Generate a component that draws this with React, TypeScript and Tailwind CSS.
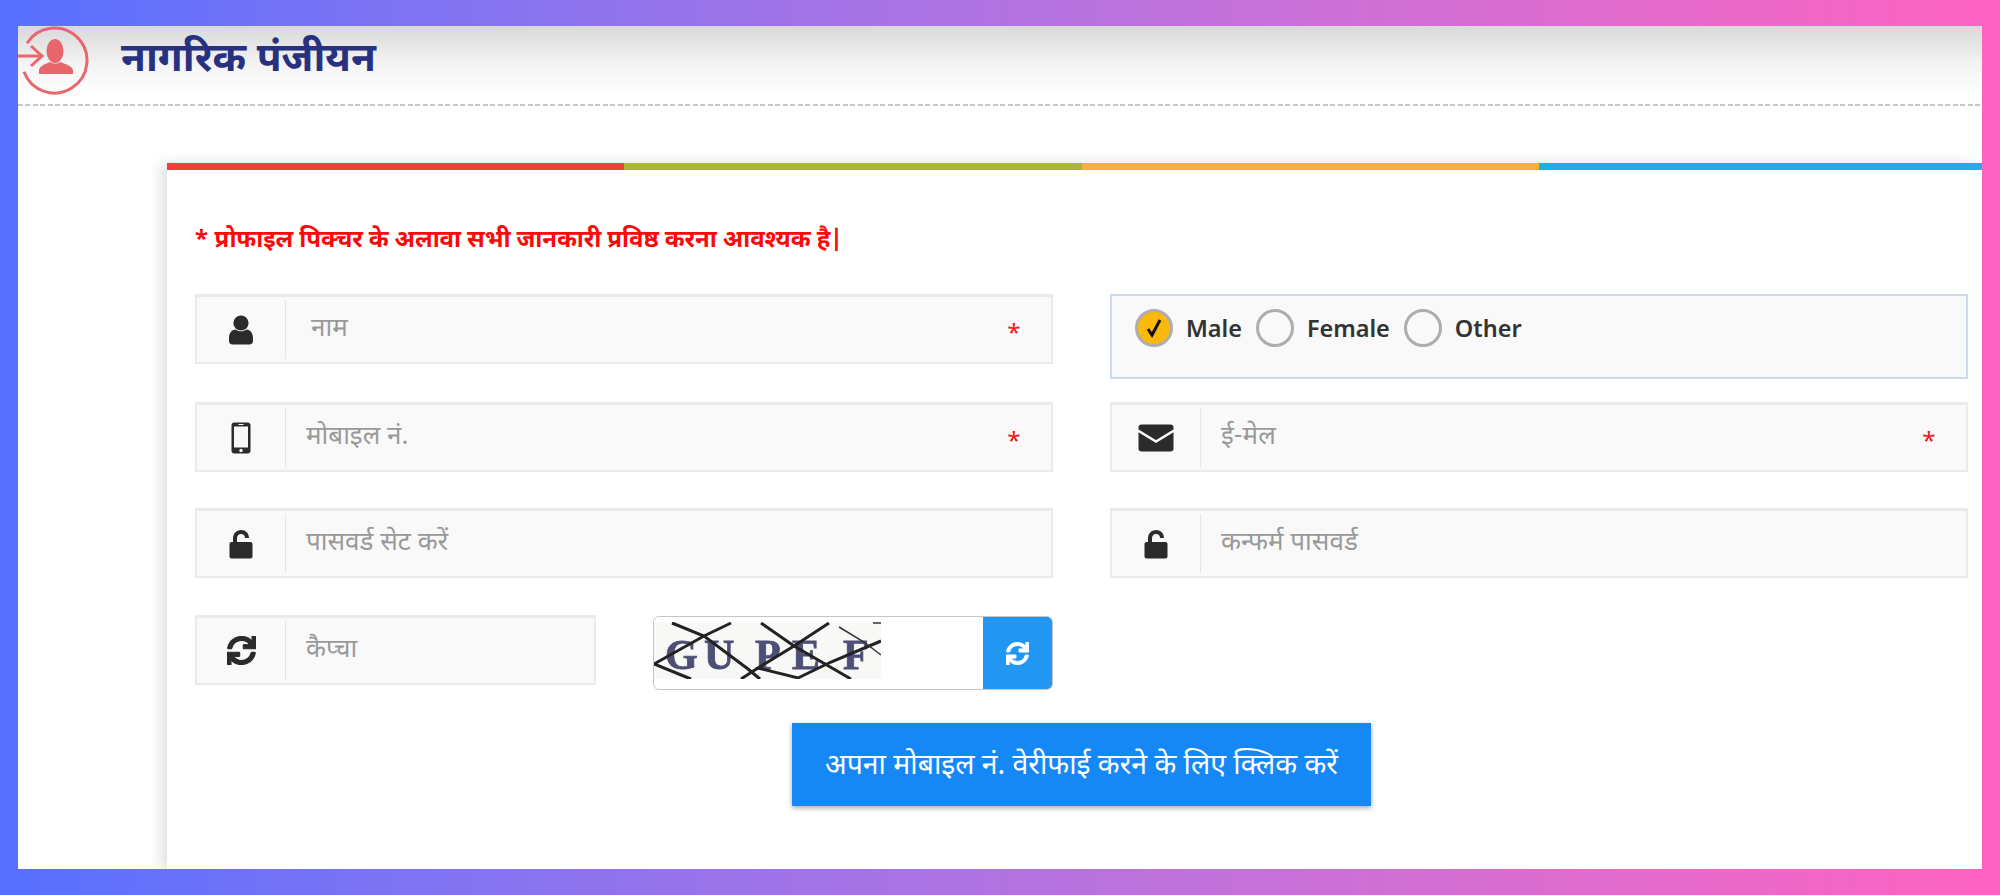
import { FaSync } from 'react-icons/fa';

const font = { fontFamily: '"Noto Sans Devanagari", "Noto Sans", "Open Sans", "Liberation Sans", sans-serif' };

function UserIcon() {
  return (
    <svg width="26" height="30" viewBox="0 0 26 30" fill="#2b2b2b">
      <circle cx="13" cy="8" r="7.6" />
      <path d="M1 23c0-5 3-8.500 6.500-8.500 1.500 1 3.500 1.800 5.500 1.800s4-.8 5.500-1.800C22 14.500 25 18 25 23v3c0 2-1.500 3.500-3.500 3.500h-17C2.500 29.500 1 28 1 26z" />
    </svg>
  );
}

function MobileIcon() {
  return (
    <svg width="20" height="32" viewBox="0 0 20 32">
      <rect x="0.5" y="0.500" width="19" height="31" rx="3" fill="#2b2b2b" />
      <rect x="3" y="4.500" width="14" height="21" fill="#f8f8f8" />
      <rect x="7.500" y="2" width="5" height="1" fill="#f8f8f8" />
      <circle cx="10" cy="28.500" r="1.700" fill="#f8f8f8" />
    </svg>
  );
}

function UnlockIcon() {
  return (
    <svg width="24" height="30" viewBox="0 0 24 30" fill="#2b2b2b">
      <path d="M4 14V9.500C4 4.500 7.500 1 12 1s8 3 8 8h-4c0-2.500-1.500-4-4-4S8 7 8 9.500V14z" />
      <rect x="0.500" y="13" width="23" height="16.500" rx="2" />
    </svg>
  );
}

function MailIcon() {
  return (
    <svg width="36" height="28" viewBox="0 0 36 28">
      <rect x="0.500" y="0.500" width="35" height="27" rx="3" fill="#2b2b2b" />
      <path d="M0 6.500l18 11 18-11" fill="none" stroke="#f8f8f8" strokeWidth="2.500" />
    </svg>
  );
}

function Logo() {
  return (
    <svg width="74" height="72" viewBox="0 0 74 72" className="shrink-0" fill="none">
      <path d="M9 17.200A32.500 32.500 0 1 1 6 45.700" stroke="#e8676d" strokeWidth="3" />
      <path d="M0 30h23M13 20l11 10-11 10" stroke="#e8676d" strokeWidth="3" />
      <ellipse cx="37" cy="25" rx="8.500" ry="12" fill="#e8676d" />
      <path d="M21 48v-4c1-4 6-6 11-8 3 2 7 2 10 0 5 2 12 4 13 8v4z" fill="#e8676d" />
    </svg>
  );
}

function Field({ icon, placeholder, required, indent }: { icon: React.ReactNode; placeholder: string; required?: boolean; indent?: boolean }) {
  return (
    <div className="flex h-[70px] border-2 border-t-[3px] border-[#eaeaea] bg-[#f9f9f9]">
      <div className="flex w-[88px] items-center justify-center">{icon}</div>
      <div className="my-[3px] w-px bg-[#e6e6e6]" />
      <div className={`flex flex-1 items-start justify-between pt-[15px] pr-[30px] ${indent ? 'pl-[25px]' : 'pl-[20px]'}`}>
        <span className="text-[26px] leading-[36px] text-[#999]">{placeholder}</span>
        {required && <span className="mt-[5px] text-[24px] leading-[36px] text-[#f01818]">*</span>}
      </div>
    </div>
  );
}

function Radio({ label, checked }: { label: string; checked?: boolean }) {
  return (
    <div className="flex items-center">
      <span className={`flex h-[38px] w-[38px] items-center justify-center rounded-full border-[3px] border-[#adadad] ${checked ? 'bg-[#fdb90b]' : 'bg-transparent'}`}>
        {checked && (
          <svg width="18" height="20" viewBox="0 0 18 20" fill="none">
            <path d="M3 11l4 6L15 2" stroke="#111" strokeWidth="3" />
          </svg>
        )}
      </span>
      <span className="ml-[13px] mt-[7px] text-[23.5px] font-semibold leading-none text-[#333]">{label}</span>
    </div>
  );
}

function Captcha() {
  return (
    <svg width="227" height="57" viewBox="0 0 227 57" className="bg-[#f8f8f6]">
      <g className="blur-[0.5px]">
        <g fontFamily="Liberation Serif, serif" fontWeight="700" fontSize="42" fill="#4d4f75" stroke="#4d4f75" strokeWidth="0.800">
          <text x="11" y="47">G</text>
          <text x="50" y="47">U</text>
          <text x="101" y="47">P</text>
          <text x="138" y="47">E</text>
          <text x="189" y="47">F</text>
        </g>
        <g stroke="#222" strokeWidth="3" fill="none">
          <path d="M18 1l32 13 44 33 12 10" />
          <path d="M77 1L50 14 0 42l37 15" />
          <path d="M107 1l33 23 57 33" />
          <path d="M175 1l-35 23-36 22-17 11" />
          <path d="M227 19l-50 21-33 16-40-10" />
        </g>
        <path d="M185 5l25 15 17 13M227 1h-8" stroke="#333" strokeWidth="1.500" fill="none" />
      </g>
    </svg>
  );
}

export default function App() {
  return (
    <div className="h-[895px] w-[2000px] overflow-hidden bg-gradient-to-r from-[#5570ff] to-[#ff62c0] px-[18px] py-[26px]" style={font}>
      <div className="h-[843px] overflow-hidden bg-white">
        <header className="flex h-[78px] items-start overflow-hidden bg-gradient-to-b from-[#d9d9d9] via-[#f4f4f4] via-[50%] to-white to-[90%]">
          <Logo />
          <h1 className="ml-[29px] mt-[8px] text-[40.5px] font-bold leading-[56px] text-[#27317f]">नागरिक पंजीयन</h1>
        </header>
        <div className="h-[2px] bg-[repeating-linear-gradient(90deg,#c6c6c6_0,#c6c6c6_5px,transparent_5px,transparent_7.5px)]" />
        <div className="ml-[149px] mt-[57px] h-[706px] overflow-hidden bg-white shadow-[-6px_0_12px_rgba(0,0,0,0.12)]">
          <div className="flex h-[7px] w-[1829px]">
            <div className="flex-1 bg-[#ed4139]" />
            <div className="flex-1 bg-[#a8b72f]" />
            <div className="flex-1 bg-[#fbb130]" />
            <div className="flex-1 bg-[#19b2e8]" />
          </div>
          <div className="px-[28px] pt-[53px]">
            <p className="-ml-[1px] text-[24px] font-bold leading-[36px] tracking-[-0.13px] text-[#fb0a0a]">* प्रोफाइल पिक्चर के अलावा सभी जानकारी प्रविष्ठ करना आवश्यक है|</p>
            <div className="mt-[35px] grid grid-cols-[858px_858px] gap-x-[57px]">
              <div className="mb-[38px]"><Field icon={<UserIcon />} placeholder="नाम" required indent /></div>
              <div className="mb-[23px] flex h-[85px] items-start gap-[14px] border-2 border-[#cddbe9] bg-[#f9f9f9] pl-[23px] pt-[13px]">
                <Radio label="Male" checked />
                <Radio label="Female" />
                <Radio label="Other" />
              </div>
              <div className="mb-[36px]"><Field icon={<MobileIcon />} placeholder="मोबाइल नं." required /></div>
              <div className="mb-[36px]"><Field icon={<MailIcon />} placeholder="ई-मेल" required /></div>
              <div className="mb-[37px]"><Field icon={<UnlockIcon />} placeholder="पासवर्ड सेट करें" /></div>
              <div className="mb-[37px]"><Field icon={<UnlockIcon />} placeholder="कन्फर्म पासवर्ड" /></div>
              <div className="flex items-start justify-between">
                <div className="w-[401px]"><Field icon={<FaSync stroke="currentColor" strokeWidth={20} className="text-[29px] text-[#2b2b2b]" />} placeholder="कैप्चा" /></div>
                <div className="mt-[1px] flex h-[74px] w-[400px] overflow-hidden rounded-[6px] border border-[#c6c6c6] bg-white">
                  <div className="mt-[5px] flex-1"><Captcha /></div>
                  <div className="flex w-[69px] items-center justify-center bg-[#2196f3]"><FaSync stroke="currentColor" strokeWidth={20} className="text-[23px] text-white" /></div>
                </div>
              </div>
            </div>
            <div className="mt-[33px] flex justify-center pl-[14px]">
              <button className="h-[83px] w-[579px] bg-[#1688f5] pt-[8px] text-[28.4px] text-white shadow-[0_2px_5px_rgba(0,0,0,0.35)]">अपना मोबाइल नं. वेरीफाई करने के लिए क्लिक करें</button>
            </div>
          </div>
        </div>
      </div>
    </div>
  );
}
